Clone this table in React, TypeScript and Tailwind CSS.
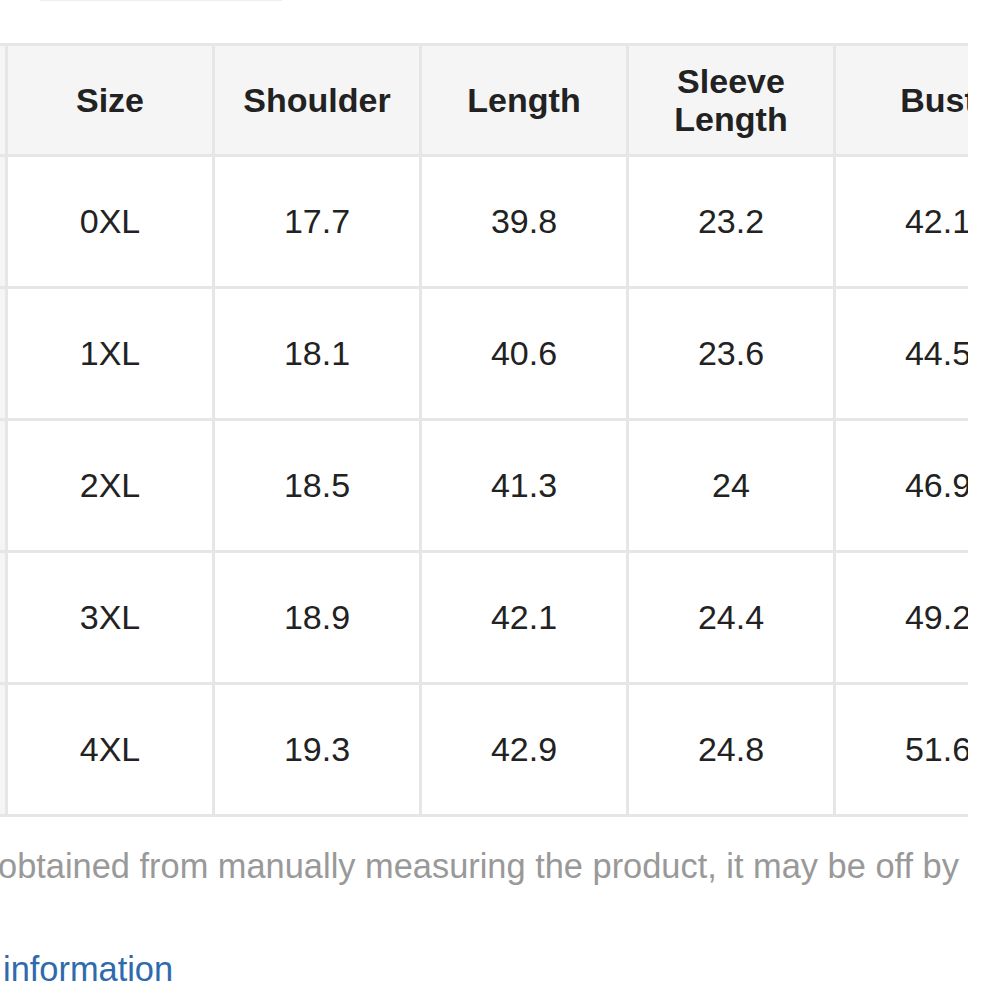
const headers = ["Size", "Shoulder", "Length", "Sleeve Length", "Bust"];

function createRow(size: string, shoulder: string, length: string, sleeve: string, bust: string) {
  return { size, shoulder, length, sleeve, bust };
}

const rows = [
  createRow("0XL", "17.7", "39.8", "23.2", "42.1"),
  createRow("1XL", "18.1", "40.6", "23.6", "44.5"),
  createRow("2XL", "18.5", "41.3", "24", "46.9"),
  createRow("3XL", "18.9", "42.1", "24.4", "49.2"),
  createRow("4XL", "19.3", "42.9", "24.8", "51.6"),
];

const cell = "w-[207px] min-w-[207px] border-r-[3px] border-b-[3px] border-[#e6e6e6] p-0 text-center align-middle";

export default function App() {
  return (
    <div className="min-h-[1000px] w-[1000px] overflow-hidden bg-white font-['Liberation_Sans',Arial,sans-serif] text-[34px] text-[#222]">
      <div className="ml-[40px] h-px w-[242px] bg-[#eeeeee]" />

      <div className="mt-[42px] w-[968px] overflow-hidden">
        <table
          className="-ml-[199px] w-[1242px] min-w-[1242px] table-fixed border-separate border-spacing-0 border-t-[3px] border-[#e6e6e6]"
          aria-label="Size chart"
        >
          <colgroup>
            <col className="w-[207px]" />
            <col className="w-[207px]" />
            <col className="w-[207px]" />
            <col className="w-[207px]" />
            <col className="w-[207px]" />
            <col className="w-[207px]" />
          </colgroup>
          <thead>
            <tr className="h-[111px] bg-[#f5f5f5] leading-[38px]">
              <th className={cell} />
              {headers.map((h) => (
                <th key={h} className={`${cell} px-4 font-bold`}>
                  {h}
                </th>
              ))}
            </tr>
          </thead>
          <tbody>
            {rows.map((row) => (
              <tr key={row.size} className="h-[132px]">
                <td className={`${cell} bg-[#f5f5f5]`} />
                <td className={cell}>{row.size}</td>
                <td className={cell}>{row.shoulder}</td>
                <td className={cell}>{row.length}</td>
                <td className={cell}>{row.sleeve}</td>
                <td className={cell}>{row.bust}</td>
              </tr>
            ))}
          </tbody>
        </table>
      </div>

      <p className="mt-[30px] -ml-[2px] whitespace-nowrap text-[34.4px] leading-[39px] text-[#999]">
        obtained from manually measuring the product, it may be off by
      </p>
      <p className="mt-[64px] ml-[3px] whitespace-nowrap text-[34.4px] leading-[39px] text-[#2e6aad]">information</p>
    </div>
  );
}
